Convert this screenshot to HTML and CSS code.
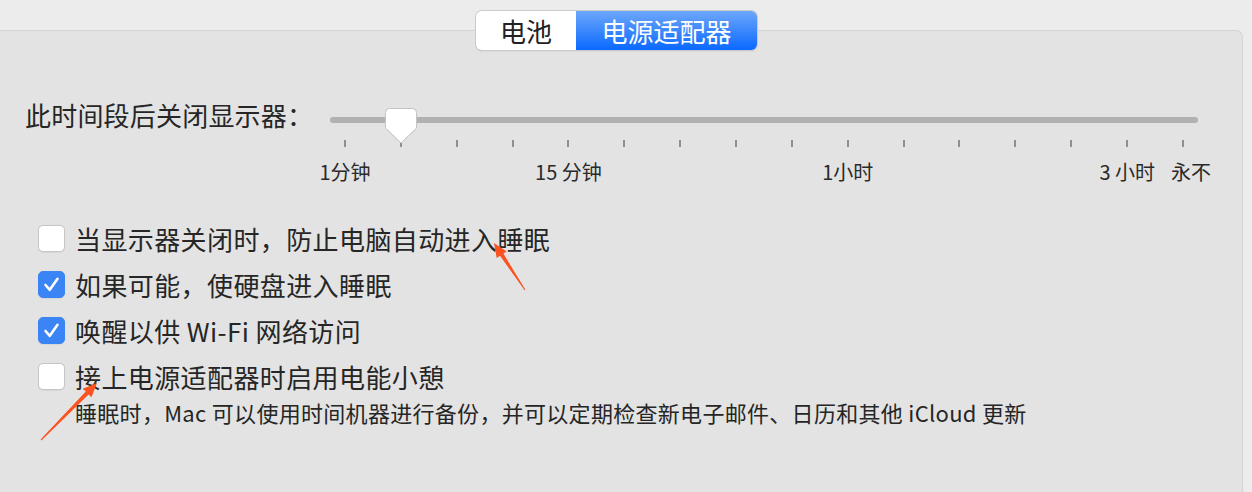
FILE: index.html
```html
<!DOCTYPE html>
<html lang="zh-CN">
<head>
<meta charset="utf-8">
<title>节能</title>
<link rel="stylesheet" href="styles.css">
</head>
<body>
<div class="window">
  <div class="tabs">
    <span class="seg">电池</span>
    <span class="seg active">电源适配器</span>
  </div>
  <div class="panel">
    <div class="sleep-row">
      <div class="sleep-label">此时间段后关闭显示器：</div>
      <div class="slider">
        <div class="track"></div>
        <div class="ticks">
          <i></i><i></i><i></i><i></i><i></i><i></i><i></i><i></i>
          <i></i><i></i><i></i><i></i><i></i><i></i><i></i><i></i>
        </div>
        <svg class="thumb" width="34" height="38" viewBox="0 0 34 38">
          <path d="M5.5 1.5 H28.5 Q32.5 1.5 32.5 5.5 V21 L17 36 L1.5 21 V5.5 Q1.5 1.5 5.5 1.5 Z" fill="#ffffff" stroke="#c4c4c4" stroke-width="1"/>
        </svg>
        <div class="scale">
          <span class="cell">1分钟</span><span class="cell"></span><span class="cell"></span><span class="cell"></span>
          <span class="cell">15 分钟</span><span class="cell"></span><span class="cell"></span><span class="cell"></span>
          <span class="cell"></span><span class="cell">1小时</span><span class="cell"></span><span class="cell"></span>
          <span class="cell"></span><span class="cell"></span><span class="cell">3 小时</span><span class="cell end">永不</span>
        </div>
      </div>
    </div>
    <div class="options">
      <div class="option"><span class="box"></span><span>当显示器关闭时，防止电脑自动进入睡眠</span></div>
      <div class="option"><span class="box checked"><svg width="27" height="27" viewBox="0 0 27 27"><path d="M7.5 14 L11.8 18.8 L19.5 7.8" fill="none" stroke="#fff" stroke-width="2.6" stroke-linecap="round" stroke-linejoin="round"/></svg></span><span>如果可能，使硬盘进入睡眠</span></div>
      <div class="option"><span class="box checked"><svg width="27" height="27" viewBox="0 0 27 27"><path d="M7.5 14 L11.8 18.8 L19.5 7.8" fill="none" stroke="#fff" stroke-width="2.6" stroke-linecap="round" stroke-linejoin="round"/></svg></span><span>唤醒以供 Wi-Fi 网络访问</span></div>
      <div class="option"><span class="box"></span><span>接上电源适配器时启用电能小憩</span></div>
      <div class="desc">睡眠时，Mac 可以使用时间机器进行备份，并可以定期检查新电子邮件、日历和其他 iCloud 更新</div>
    </div>
  </div>
  <svg class="annotations" width="1252" height="492" viewBox="0 0 1252 492">
    <polygon points="525.4,289.7 503.4,253.6 506.7,251.4 494,243 496.7,258.0 500.0,255.8 524.6,290.3" fill="#fa5220"/>
    <polygon points="41.4,440.4 88.6,394.4 91.5,397.2 97,383 82.9,388.8 85.8,391.6 40.6,439.6" fill="#fa5220"/>
  </svg>
</div>
</body>
</html>
```

FILE: styles.css
```css
html, body {
  margin: 0;
  padding: 0;
}

body {
  background: #ececec;
  font-family: "Noto Sans CJK SC", "Noto Sans", sans-serif;
  color: #262626;
  width: 1252px;
  height: 492px;
  overflow: hidden;
}

.window {
  position: relative;
  width: 1252px;
  height: 492px;
  padding-top: 11px;
  box-sizing: border-box;
}

.tabs {
  position: relative;
  z-index: 2;
  display: flex;
  margin-left: 476px;
  width: 281px;
  height: 39px;
  border-radius: 6px;
  box-shadow: 0 0 0 1px #cbcbcb, 0 1px 1.5px rgba(0, 0, 0, 0.22);
  overflow: hidden;
}

.seg {
  display: flex;
  align-items: center;
  justify-content: center;
  width: 100px;
  background: #ffffff;
  font-size: 26px;
  line-height: 39px;
  color: #222;
}

.seg.active {
  width: 181px;
  background: linear-gradient(to bottom, #6da7fb, #0a69ff);
  color: #ffffff;
}

.panel {
  margin-top: -20px;
  margin-left: -10px;
  width: 1253px;
  height: 462px;
  box-sizing: border-box;
  background: #e3e3e3;
  border: 1px solid #d4d4d4;
  border-bottom: none;
  border-radius: 7px 7px 0 0;
  padding: 68px 0 0 34px;
}

.sleep-row {
  display: flex;
  align-items: flex-start;
}

.sleep-label {
  width: 305px;
  font-size: 26px;
  line-height: 32px;
  letter-spacing: 0.2px;
  white-space: nowrap;
}

.slider {
  position: relative;
  width: 868px;
  display: flex;
  flex-direction: column;
}

.track {
  margin-top: 18px;
  height: 6px;
  border-radius: 3px;
  background: #b1b1b1;
}

.ticks {
  display: flex;
  justify-content: space-between;
  padding: 0 14px;
  margin-top: 17px;
  height: 7px;
}

.ticks i {
  display: block;
  width: 2px;
  height: 7px;
  background: #8f8f8f;
}

.thumb {
  position: absolute;
  left: 54px;
  top: 8px;
  filter: drop-shadow(0 0.5px 0.5px rgba(0, 0, 0, 0.12));
}

.scale {
  display: grid;
  grid-template-columns: repeat(16, minmax(0, 1fr));
  margin: 13px -13px 0 -13px;
  font-size: 20px;
  line-height: 24px;
  color: #2a2a2a;
}

.cell {
  display: flex;
  justify-content: center;
  white-space: nowrap;
}

.cell.end {
  justify-content: flex-end;
}

.options {
  margin-top: 31px;
  margin-left: 13px;
}

.option {
  display: flex;
  align-items: center;
  gap: 10px;
  height: 46px;
  font-size: 26px;
  letter-spacing: 0.4px;
  white-space: nowrap;
}

.box {
  display: block;
  flex: none;
  width: 27px;
  height: 27px;
  box-sizing: border-box;
  border-radius: 5px;
  background: #ffffff;
  border: 1px solid #c6c6c6;
  box-shadow: 0 0.5px 1px rgba(0, 0, 0, 0.06);
}

.box.checked {
  background: #3b84f6;
  border-color: #3b84f6;
}

.box svg {
  display: block;
  margin: -1px;
}

.desc {
  padding-left: 37px;
  font-size: 22px;
  line-height: 26px;
  letter-spacing: 0.3px;
  white-space: nowrap;
}

.annotations {
  position: absolute;
  left: 0;
  top: 0;
  pointer-events: none;
}
```
